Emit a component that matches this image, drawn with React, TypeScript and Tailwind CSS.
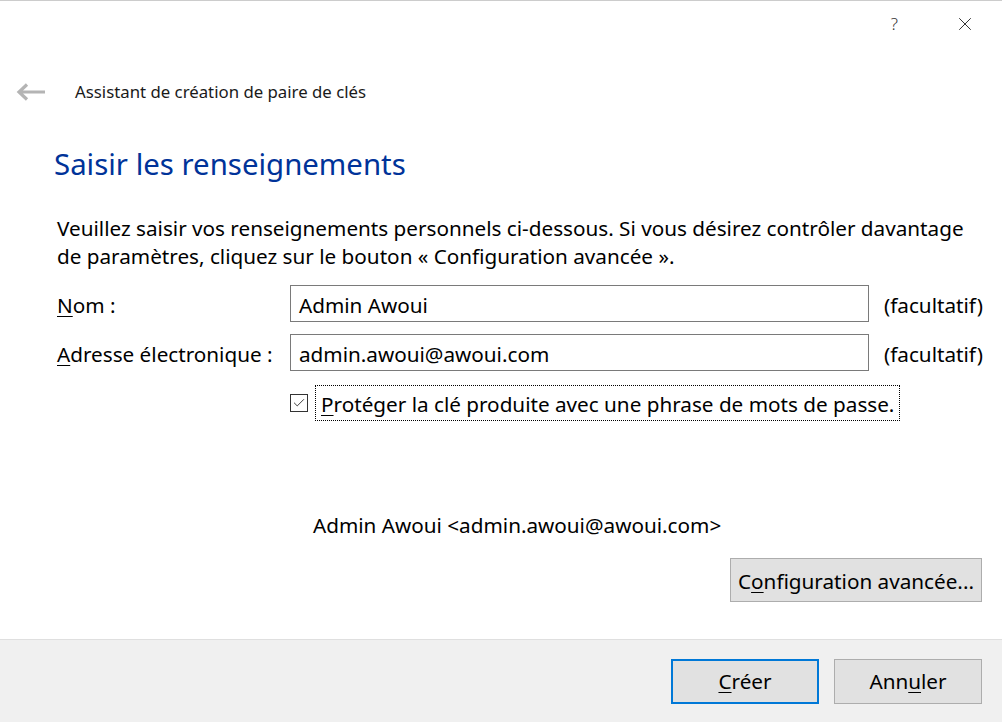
import { Check, X } from "lucide-react";

function Mnemonic({ text, index }: { text: string; index: number }) {
  return (
    <>
      {text.slice(0, index)}
      <span className="underline decoration-1 underline-offset-[3px]">{text[index]}</span>
      {text.slice(index + 1)}
    </>
  );
}

export default function App() {
  return (
    <div
      className="flex h-[722px] w-[1002px] flex-col bg-white text-[#000]"
      style={{ fontFamily: '"Noto Sans", "Open Sans", sans-serif' }}
    >
      <div className="h-px shrink-0 bg-[#cccccc]" />

      {/* title bar */}
      <div className="flex h-[46px] shrink-0 items-center justify-end pr-[26px]">
        <span className="mr-[56px] text-[17px] font-light text-[#333]">?</span>
        <X className="h-[22px] w-[22px] text-[#222]" strokeWidth={1} />
      </div>

      {/* wizard header */}
      <div className="mt-[30px] flex h-[30px] shrink-0 items-center">
        <svg className="ml-[16px] h-[20px] w-[30px]" viewBox="0 0 30 20">
          <path d="M29 10H4M11 2.5 3 10l8 7.5" fill="none" stroke="#b4b4b4" strokeWidth="3.2" />
        </svg>
        <span className="ml-[29px] text-[16.8px] text-[#1a1a1a]">Assistant de création de paire de clés</span>
      </div>

      <div className="flex flex-1 flex-col pl-[54px] pr-[20px]">
        <h1 className="mt-[39px] text-[29.4px] leading-[36px] text-[#003399]">Saisir les renseignements</h1>

        <p className="mt-[32px] pl-[3px] text-[20.7px] leading-[28px]">
          Veuillez saisir vos renseignements personnels ci-dessous. Si vous désirez contrôler davantage de paramètres, cliquez sur le bouton « Configuration avancée ».
        </p>

        <div className="mt-[15px] grid grid-cols-[233px_579px_1fr] items-center gap-y-[12px] pl-[3px] text-[20.7px]">
          <label className="pt-[5px]">
            <Mnemonic text="Nom :" index={0} />
          </label>
          <div className="flex h-[37px] items-center border border-[#7a7a7a] px-[8px] pt-[4px]">Admin Awoui</div>
          <span className="pl-[15px] pt-[5px]">(facultatif)</span>

          <label className="pt-[5px]">
            <Mnemonic text="Adresse électronique :" index={0} />
          </label>
          <div className="flex h-[37px] items-center border border-[#7a7a7a] px-[8px] pt-[4px]">admin.awoui@awoui.com</div>
          <span className="pl-[15px] pt-[5px]">(facultatif)</span>

          <div />
          <div className="col-span-2 mt-[2px] flex items-center">
            <span className="flex h-[18px] w-[18px] items-center justify-center border border-[#333] bg-white">
              <Check className="h-[14px] w-[14px] text-[#333]" strokeWidth={1.6} />
            </span>
            <span className="ml-[7px] border border-dotted border-[#000] px-[5px] pt-[2px] leading-[32px]">
              <Mnemonic text="Protéger la clé produite avec une phrase de mots de passe." index={0} />
            </span>
          </div>
        </div>

        <div className="mt-[89px] pl-[259px] text-[20.7px]">Admin Awoui &lt;admin.awoui@awoui.com&gt;</div>

        <div className="mt-[17px] flex justify-end">
          <button className="h-[44px] w-[252px] border border-[#adadad] bg-[#e1e1e1] pt-[2px] text-[20.7px]">
            <Mnemonic text="Configuration avancée..." index={1} />
          </button>
        </div>
      </div>

      {/* footer */}
      <div className="flex h-[83px] shrink-0 items-center justify-end gap-[15px] border-t border-[#dfdfdf] bg-[#f0f0f0] pr-[20px]">
        <button className="h-[45px] w-[148px] border-2 border-[#0078d7] bg-[#e1e1e1] pt-[2px] text-[20.7px]">
          <Mnemonic text="Créer" index={0} />
        </button>
        <button className="h-[45px] w-[148px] border border-[#adadad] bg-[#e1e1e1] pt-[2px] text-[20.7px]">
          <Mnemonic text="Annuler" index={3} />
        </button>
      </div>
    </div>
  );
}
